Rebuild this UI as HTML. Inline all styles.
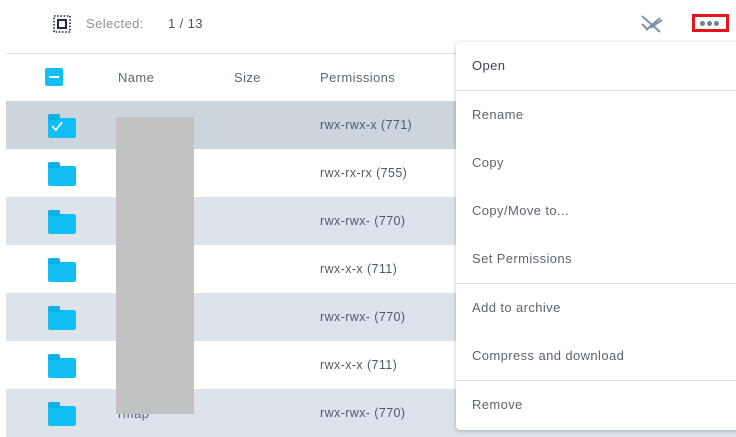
<!DOCTYPE html>
<html><head><style>
*{margin:0;padding:0;box-sizing:border-box}
body{width:736px;height:437px;overflow:hidden;background:#fff;font-family:"Liberation Sans",sans-serif;position:relative;color:#4a5560;letter-spacing:0.4px}
.a{position:absolute}
.row{position:absolute;left:6px;width:730px;height:48px}
.perm{position:absolute;left:314px;font-size:12.5px;color:#4f5a66;top:17px}
.fold{position:absolute;left:48px;top:17px;width:28px;height:20px;background:#12bff5;border-radius:2px}
.fold:before{content:"";position:absolute;left:0;top:-4px;width:12px;height:6px;background:#0fb0e3;border-radius:2px 2px 0 0}
.menu{position:absolute;left:456px;top:42px;width:290px;height:388px;background:#fff;border-radius:4px;box-shadow:0 1px 4px rgba(0,0,0,.25)}
.mi{position:absolute;left:16px;font-size:13px;color:#5c6570}
.hr{position:absolute;left:0;right:0;height:1px;background:#dde0e3}
</style></head><body>
<svg class="a" style="left:53px;top:15px" width="18" height="18" viewBox="0 0 18 18"><rect x="1" y="1" width="16" height="16" fill="none" stroke="#1d2a44" stroke-width="1.6" stroke-dasharray="1.6 1.6"/><rect x="5" y="5" width="8" height="8" fill="none" stroke="#1d2a44" stroke-width="2"/></svg>
<div class="a" style="left:86px;top:16px;font-size:13px;color:#8a929b">Selected:</div>
<div class="a" style="left:168px;top:16px;font-size:13px;color:#4a5560">1 / 13</div>
<svg class="a" style="left:640px;top:14px" width="24" height="20" viewBox="0 0 24 20"><g stroke="#7d93a8" stroke-width="2" fill="none"><line x1="2" y1="2" x2="20" y2="18"/><line x1="6" y1="16" x2="20" y2="4"/><line x1="2" y1="10" x2="8" y2="16"/><line x1="10" y1="14" x2="22" y2="6"/></g></svg>
<div class="a" style="left:692px;top:14px;width:37px;height:18px;border:3px solid #e8141c"></div>
<div class="a" style="left:700px;top:21px;font-size:0"><span style="display:inline-block;width:5px;height:5px;border-radius:50%;background:#717e8c;margin-right:2px"></span><span style="display:inline-block;width:5px;height:5px;border-radius:50%;background:#717e8c;margin-right:2px"></span><span style="display:inline-block;width:5px;height:5px;border-radius:50%;background:#717e8c"></span></div>
<div class="a" style="left:6px;top:53px;width:730px;height:1px;background:#dfe3e6"></div>
<div class="a" style="left:45px;top:68px;width:18px;height:18px;background:#12bff5;border-radius:2px"><div style="position:absolute;left:4px;top:8px;width:10px;height:2px;background:#fff"></div></div>
<div class="a" style="left:118px;top:70px;font-size:13px;color:#5b6775">Name</div>
<div class="a" style="left:234px;top:70px;font-size:13px;color:#5b6775">Size</div>
<div class="a" style="left:320px;top:70px;font-size:13px;color:#5b6775">Permissions</div>
<div class="row" style="top:101px;background:#cdd5dc"><div class="fold" style="left:42px"><svg style="position:absolute;left:2px;top:2px" width="14" height="12"><path d="M2 6 L6 10 L12 2" stroke="#fff" stroke-width="1.6" fill="none"/></svg></div><div class="perm">rwx-rwx-x (771)</div></div>
<div class="row" style="top:149px"><div class="fold" style="left:42px"></div><div class="perm">rwx-rx-rx (755)</div></div>
<div class="row" style="top:197px;background:#dce3ea"><div class="fold" style="left:42px"></div><div class="perm">rwx-rwx- (770)</div></div>
<div class="row" style="top:245px"><div class="fold" style="left:42px"></div><div class="perm">rwx-x-x (711)</div></div>
<div class="row" style="top:293px;background:#dce3ea"><div class="fold" style="left:42px"></div><div class="perm">rwx-rwx- (770)</div></div>
<div class="row" style="top:341px"><div class="fold" style="left:42px"></div><div class="perm">rwx-x-x (711)</div></div>
<div class="row" style="top:389px;background:#dce3ea"><div class="fold" style="left:42px"></div><div class="a" style="left:112px;top:17px;font-size:13px;color:#5b6775">rmap</div><div class="perm">rwx-rwx- (770)</div></div>
<div class="a" style="left:116px;top:117px;width:78px;height:297px;background:#c2c2c2"></div>
<div class="menu">
<div class="mi" style="top:16px;color:#3e4650">Open</div>
<div class="hr" style="top:48px"></div>
<div class="mi" style="top:65px">Rename</div>
<div class="mi" style="top:113px">Copy</div>
<div class="mi" style="top:161px">Copy/Move to...</div>
<div class="mi" style="top:209px">Set Permissions</div>
<div class="hr" style="top:241px"></div>
<div class="mi" style="top:258px">Add to archive</div>
<div class="mi" style="top:306px">Compress and download</div>
<div class="hr" style="top:338px"></div>
<div class="mi" style="top:355px">Remove</div>
</div>
</body></html>
